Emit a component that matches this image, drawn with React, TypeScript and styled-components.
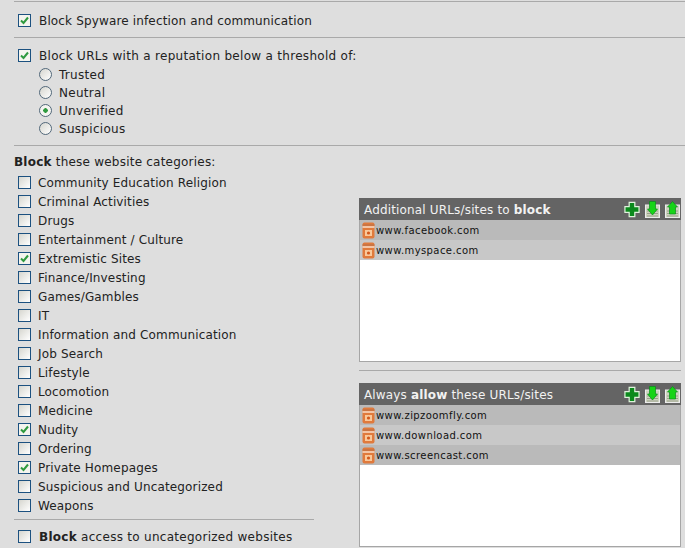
import styled, { createGlobalStyle } from "styled-components";

const GlobalStyle = createGlobalStyle`
    html, body {
        margin: 0;
        padding: 0;
        background: #dedede;
        overflow: hidden;
    }
`
const Page = styled.div`
    width: 685px;
    height: 548px;
    overflow: hidden;
    padding-left: 14px;
    box-sizing: border-box;
    font-family: "DejaVu Sans", Verdana, sans-serif;
    font-size: 12px;
    color: #222;
`
const Section = styled.div<{ h: number, first?: boolean }>`
    height: ${({ h }) => h}px;
    margin-top: ${({ first }) => (first ? 1 : 0)}px;
    border-top: 1px solid #a9a9a9;
    box-sizing: border-box;
`
const CheckRow = styled.div<{ top?: number }>`
    display: flex;
    align-items: center;
    height: 19px;
    padding-left: 4px;
    margin-top: ${({ top }) => top || 0}px;
`
const Box = styled.span<{ on?: boolean, gap?: number }>`
    width: 11px;
    height: 11px;
    border: 1px solid #1c5180;
    background: ${({ on }) => on ? "#f4f4ee" : "linear-gradient(135deg, #d6d6cf, #fff)"};
    margin-right: ${({ gap }) => gap ?? 8}px;
    flex: none;
`
const Label = styled.span<{ spread?: number }>`
    letter-spacing: ${({ spread }) => spread ?? 0.1}px;
    white-space: nowrap;
`
const RadioGroup = styled.div`
    padding-top: 1px;
`
const RadioRow = styled.div`
    display: flex;
    align-items: center;
    height: 18px;
    padding-left: 25px;
`
const RadioDot = styled.span<{ on?: boolean }>`
    width: 11px;
    height: 11px;
    border: 1px solid #52687a;
    border-radius: 50%;
    background: ${({ on }) => on
        ? "radial-gradient(circle, #2f9a3f 0 2px, #f4f4f0 2.5px)"
        : "linear-gradient(135deg, #d6d6cf, #fff)"};
    margin-right: 7px;
    margin-top: -1px;
    flex: none;
`
const Heading = styled.div`
    height: 20px;
    margin-top: 7px;
    padding-top: 1px;
    box-sizing: border-box;
    line-height: 17px;
    letter-spacing: 0.22px;
`
const Columns = styled.div`
    display: flex;
`
const Left = styled.div`
    width: 300px;
    flex: none;
`
const BottomLine = styled.div`
    border-top: 1px solid #a9a9a9;
    margin-top: 4px;
    padding-top: 7px;
`
const Right = styled.div`
    margin-left: 45px;
    width: 322px;
    padding-top: 25px;
`
const Panel = styled.div`
    height: 164px;
    box-sizing: border-box;
    background: #fff;
    border: 1px solid #a6a6a6;
`
const PanelHead = styled.div`
    height: 22px;
    margin: -1px -1px 0;
    background: #646464;
    color: #f2f2f2;
    display: flex;
    align-items: center;
    padding: 1px 1px 0 5px;
    box-sizing: border-box;
    font-size: 12px;
    letter-spacing: 0.16px;
`
const PanelTitle = styled.span`
    flex: 1;
`
const Tools = styled.span`
    display: flex;
    gap: 5px;
    align-items: center;
`
const UrlRow = styled.div<{ odd: boolean }>`
    height: 20px;
    display: flex;
    align-items: center;
    padding: 1px 0 0 2px;
    box-sizing: border-box;
    background: ${({ odd }) => (odd ? "#bababa" : "#c8c8c8")};
    color: #111;
    font-size: 10px;
    letter-spacing: 0.42px;
`
const Divider = styled.div`
    border-top: 1px solid #a9a9a9;
    margin: 8px 0 12px;
`

const Tick = () => (
    <svg width="11" height="11" viewBox="0 0 11 11" style={{ display: "block" }}>
        <path d="M2 5.5 L4.5 8 L9 2.5" fill="none" stroke="#2f9a3f" strokeWidth="2" />
    </svg>
)

const PlusIcon = () => (
    <svg width="16" height="17" viewBox="0 0 17 17">
        <path d="M5.5 1h6v4.5H16v6h-4.5V16h-6v-4.5H1v-6h4.5z" fill="#0b8a1c" stroke="#dff3dc" strokeWidth="1.3" />
    </svg>
)

const ArrowDoc = ({ up }: { up?: boolean }) => (
    <svg width="15" height="17" viewBox="0 0 15 17">
        <rect x="0.5" y="4" width="14" height="12.5" fill="#cdd3bf" stroke="#ececec" />
        <path d="M2 10h11M2 12.5h11M2 15h11" stroke="#9aa08c" />
        <path
            d={up ? "M7.5 0.5 L12.5 6 H10.5 V13 H4.5 V6 H2.5z" : "M4.5 0.5 H10.5 V8 H12.5 L7.5 14 L2.5 8 H4.5z"}
            fill="#17d417"
            stroke="#0c8a1c"
            strokeWidth="0.7"
        />
    </svg>
)

const SiteIcon = () => (
    <svg width="13" height="17" viewBox="0 0 13 17" style={{ marginRight: 1, flex: "none" }}>
        <rect x="0.5" y="0.5" width="12" height="16" rx="2" fill="#e07a3c" />
        <path d="M0.5 3h12" stroke="#b8704a" />
        <path d="M0.5 5h12" stroke="#fbe6d4" strokeWidth="1.4" />
        <rect x="3" y="8" width="7" height="6" fill="#f9c89a" />
        <circle cx="6.5" cy="11" r="1.6" fill="#d2581c" />
    </svg>
)

const CATEGORIES: [string, boolean][] = [
    ["Community Education Religion", false],
    ["Criminal Activities", false],
    ["Drugs", false],
    ["Entertainment / Culture", false],
    ["Extremistic Sites", true],
    ["Finance/Investing", false],
    ["Games/Gambles", false],
    ["IT", false],
    ["Information and Communication", false],
    ["Job Search", false],
    ["Lifestyle", false],
    ["Locomotion", false],
    ["Medicine", false],
    ["Nudity", true],
    ["Ordering", false],
    ["Private Homepages", true],
    ["Suspicious and Uncategorized", false],
    ["Weapons", false],
]

const UrlList = ({ urls }: { urls: string[] }) => (
    <>
        {urls.map((u, i) => (
            <UrlRow key={u} odd={i % 2 === 0}>
                <SiteIcon />
                {u}
            </UrlRow>
        ))}
    </>
)

const PanelTools = () => (
    <Tools>
        <PlusIcon />
        <ArrowDoc />
        <ArrowDoc up />
    </Tools>
)

export default function App() {
    return (
        <Page>
            <GlobalStyle />
            <Section h={36} first>
                <CheckRow top={9}>
                    <Box on><Tick /></Box>
                    <Label spread={0.15}>Block Spyware infection and communication</Label>
                </CheckRow>
            </Section>
            <Section h={108}>
                <CheckRow top={8}>
                    <Box on><Tick /></Box>
                    <Label spread={0.3}>Block URLs with a reputation below a threshold of:</Label>
                </CheckRow>
                <RadioGroup>
                    {["Trusted", "Neutral", "Unverified", "Suspicious"].map(r => (
                        <RadioRow key={r}>
                            <RadioDot on={r === "Unverified"} />
                            <Label spread={0.3}>{r}</Label>
                        </RadioRow>
                    ))}
                </RadioGroup>
            </Section>
            <Section h={403}>
                <Heading><b>Block</b> these website categories:</Heading>
                <Columns>
                    <Left>
                        {CATEGORIES.map(([name, on]) => (
                            <CheckRow key={name}>
                                <Box on={on} gap={7}>{on && <Tick />}</Box>
                                <Label spread={0.15}>{name}</Label>
                            </CheckRow>
                        ))}
                        <BottomLine>
                            <CheckRow>
                                <Box />
                                <Label spread={0.28}><b>Block</b> access to uncategorized websites</Label>
                            </CheckRow>
                        </BottomLine>
                    </Left>
                    <Right>
                        <Panel>
                            <PanelHead>
                                <PanelTitle>Additional URLs/sites to <b>block</b></PanelTitle>
                                <PanelTools />
                            </PanelHead>
                            <UrlList urls={["www.facebook.com", "www.myspace.com"]} />
                        </Panel>
                        <Divider />
                        <Panel>
                            <PanelHead>
                                <PanelTitle>Always <b>allow</b> these URLs/sites</PanelTitle>
                                <PanelTools />
                            </PanelHead>
                            <UrlList urls={["www.zipzoomfly.com", "www.download.com", "www.screencast.com"]} />
                        </Panel>
                    </Right>
                </Columns>
            </Section>
        </Page>
    )
}
